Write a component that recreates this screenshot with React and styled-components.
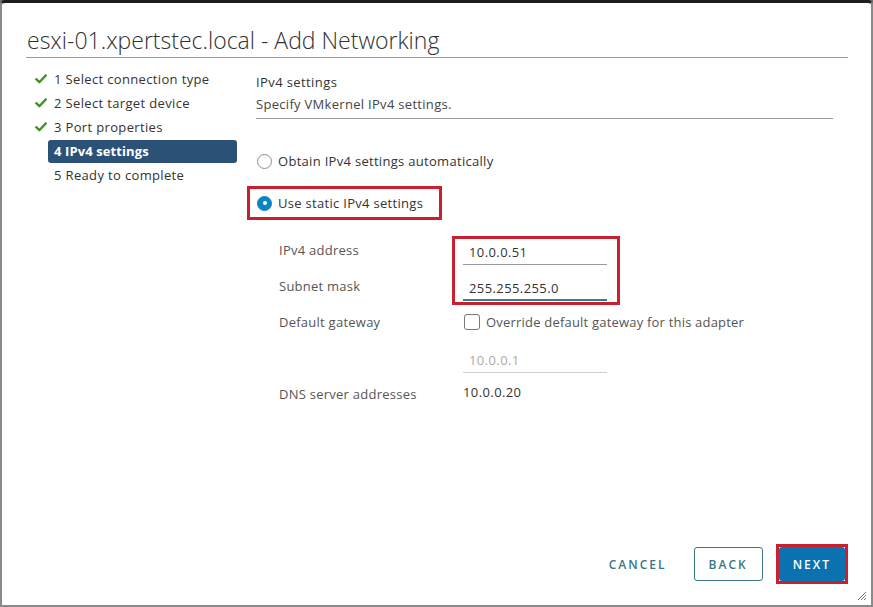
import React from 'react'
import styled, { createGlobalStyle } from 'styled-components'

const GlobalStyle = createGlobalStyle`
  html, body {
    margin: 0;
    padding: 0;
    background: #6f6f6f;
  }
  body {
    font-family: "Open Sans", Lato, sans-serif;
    font-size: 13px;
    letter-spacing: 0.3px;
    color: #333;
  }
`

const Dialog = styled.div`
  position: relative;
  box-sizing: border-box;
  width: 873px;
  height: 607px;
  background: #fff;
  border: 2px solid #8a8a8a;
  border-top: 3px solid #1e1e1e;
  border-radius: 5px 5px 0 0;
  display: flex;
  flex-direction: column;
`

const Header = styled.div`
  padding: 23px 23px 0 24px;
`

const Title = styled.h1`
  margin: 0;
  font-size: 23px;
  font-weight: 300;
  letter-spacing: 0;
  line-height: 28px;
  color: #313131;
  padding: 0 0 3px 1px;
  border-bottom: 1px solid #9a9a9a;
`

const Body = styled.div`
  flex: 1;
  display: flex;
  gap: 19px;
  padding: 9px 38px 0 24px;
`

const Nav = styled.ul`
  list-style: none;
  margin: 0;
  padding: 0;
  width: 211px;
`

const NavRow = styled.li`
  display: flex;
  align-items: center;
  height: 24px;
`

const CheckSlot = styled.span`
  width: 22px;
  display: flex;
  padding-left: 9px;
  box-sizing: border-box;
`

const NavItem = styled.span`
  flex: 1;
  height: 23px;
  line-height: 23px;
  padding-left: 6px;
  border-radius: 3px;
  font-weight: ${p => (p.$active ? 700 : 500)};
  letter-spacing: ${p => (p.$active ? 0.1 : 0.35)}px;
  color: ${p => (p.$active ? '#fff' : '#333')};
  background: ${p => (p.$active ? '#2c5177' : 'transparent')};
`

const Content = styled.div`
  flex: 1;
  padding-top: 5px;
`

const SectionHead = styled.div`
  border-bottom: 1px solid #9a9a9a;
  padding-bottom: 4px;
`

const SectionTitle = styled.div`
  font-weight: 500;
  line-height: 20px;
  letter-spacing: 0.4px;
  color: #333;
`

const SectionDesc = styled.div`
  line-height: 20px;
  margin-top: 2px;
  color: #444;
`

const RadioGroup = styled.div`
  display: flex;
  flex-direction: column;
  gap: 22px;
  margin-top: 32px;
  padding-left: 1px;
`

const Highlight = styled.div`
  position: relative;
  align-self: flex-start;
  &::after {
    content: '';
    position: absolute;
    top: ${p => p.$top}px;
    left: ${p => p.$left}px;
    width: ${p => p.$w}px;
    height: ${p => p.$h}px;
    border: 3px solid #c8202e;
    box-sizing: border-box;
    pointer-events: none;
  }
`

const RadioRow = styled.label`
  display: flex;
  align-items: center;
  gap: 6px;
  height: 20px;
  font-weight: 500;
  color: #333;
`

const RadioDot = styled.span`
  box-sizing: border-box;
  width: 15px;
  height: 15px;
  border-radius: 50%;
  border: 1px solid ${p => (p.$on ? '#0b84c6' : '#8d8d8d')};
  background: ${p => (p.$on ? '#0b84c6' : '#fff')};
  display: flex;
  align-items: center;
  justify-content: center;
  &::after {
    content: '';
    display: ${p => (p.$on ? 'block' : 'none')};
    width: 4px;
    height: 4px;
    border-radius: 50%;
    background: #fff;
  }
`

const FormGrid = styled.div`
  display: grid;
  grid-template-columns: 184px 1fr;
  grid-auto-rows: 36px;
  margin-top: 19px;
  padding-left: 23px;
`

const Label = styled.div`
  grid-column: 1;
  display: flex;
  align-items: center;
  letter-spacing: 0.25px;
  color: #555;
`

const InputStack = styled(Highlight)`
  grid-column: 2;
  grid-row: 1 / 3;
  display: grid;
  grid-template-rows: 36px 36px;
  align-self: stretch;
`

const Cell = styled.div`
  grid-column: 2;
  display: flex;
  align-items: center;
`

const StackCell = styled.div`
  display: flex;
  align-items: center;
`

const TextInput = styled.div`
  box-sizing: border-box;
  width: 144px;
  height: 24px;
  margin-top: 6px;
  padding-left: 6px;
  line-height: 23px;
  letter-spacing: 0.4px;
  color: ${p => (p.$disabled ? '#aaa' : '#333')};
  border-bottom: ${p => (p.$focus ? '2px solid #2f8092' : p.$disabled ? '1px solid #cfcfcf' : '1px solid #9a9a9a')};
`

const CheckRow = styled.label`
  display: flex;
  align-items: center;
  gap: 6px;
  padding-left: 1px;
  letter-spacing: 0.2px;
  color: #555;
`

const CheckBox = styled.span`
  box-sizing: border-box;
  width: 16px;
  height: 16px;
  border: 1px solid #777;
  border-radius: 3px;
`

const Value = styled.div`
  letter-spacing: 0.4px;
  color: #333;
  margin-top: -4px;
`

const Footer = styled.div`
  display: flex;
  justify-content: flex-end;
  align-items: center;
  padding: 0 23px 21px 0;
`

const Button = styled.button`
  box-sizing: border-box;
  height: 34px;
  padding: 0 ${p => p.$pad || 15}px;
  margin-left: ${p => p.$gap || 0}px;
  font-family: inherit;
  font-size: 12px;
  font-weight: 600;
  letter-spacing: 2px;
  border-radius: 3px;
  border: 1px solid ${p => (p.$variant === 'outline' ? '#3a7683' : 'transparent')};
  background: ${p => (p.$variant === 'primary' ? '#0a72b0' : 'transparent')};
  color: ${p => (p.$variant === 'primary' ? '#fff' : '#3a7683')};
  cursor: pointer;
`

const NextWrap = styled.div`
  margin-left: 13px;
  border: 3px solid #c8202e;
  display: flex;
`

const Grip = styled.svg`
  position: absolute;
  right: 4px;
  bottom: 4px;
`

const Check = () => (
  <svg width="12" height="10" viewBox="0 0 12 10">
    <path d="M1.2 5.2 L4.4 8.2 L10.8 1.4" fill="none" stroke="#4b8f2c" strokeWidth="2.4" strokeLinecap="round" strokeLinejoin="round" />
  </svg>
)

const steps = [
  { label: '1 Select connection type', done: true },
  { label: '2 Select target device', done: true },
  { label: '3 Port properties', done: true },
  { label: '4 IPv4 settings', active: true },
  { label: '5 Ready to complete' },
]

export default function App() {
  return (
    <>
      <GlobalStyle />
      <Dialog>
        <Header>
          <Title>esxi-01.xpertstec.local - Add Networking</Title>
        </Header>
        <Body>
          <Nav>
            {steps.map(s => (
              <NavRow key={s.label}>
                <CheckSlot>{s.done && <Check />}</CheckSlot>
                <NavItem $active={s.active}>{s.label}</NavItem>
              </NavRow>
            ))}
          </Nav>
          <Content>
            <SectionHead>
              <SectionTitle>IPv4 settings</SectionTitle>
              <SectionDesc>Specify VMkernel IPv4 settings.</SectionDesc>
            </SectionHead>
            <RadioGroup>
              <RadioRow>
                <RadioDot />
                Obtain IPv4 settings automatically
              </RadioRow>
              <Highlight $top={-7} $left={-10} $w={195} $h={34}>
                <RadioRow>
                  <RadioDot $on />
                  Use static IPv4 settings
                </RadioRow>
              </Highlight>
            </RadioGroup>
            <FormGrid>
              <Label>IPv4 address</Label>
              <InputStack $top={4} $left={-11} $w={168} $h={69}>
                <StackCell>
                  <TextInput>10.0.0.51</TextInput>
                </StackCell>
                <StackCell>
                  <TextInput $focus>255.255.255.0</TextInput>
                </StackCell>
              </InputStack>
              <Label>Subnet mask</Label>
              <Label>Default gateway</Label>
              <Cell>
                <CheckRow>
                  <CheckBox />
                  Override default gateway for this adapter
                </CheckRow>
              </Cell>
              <Label />
              <Cell>
                <TextInput $disabled>10.0.0.1</TextInput>
              </Cell>
              <Label>DNS server addresses</Label>
              <Cell>
                <Value>10.0.0.20</Value>
              </Cell>
            </FormGrid>
          </Content>
        </Body>
        <Footer>
          <Button $pad={11}>CANCEL</Button>
          <Button $variant="outline" $gap={15} $pad={14}>BACK</Button>
          <NextWrap>
            <Button $variant="primary" $pad={13}>NEXT</Button>
          </NextWrap>
        </Footer>
        <Grip width="10" height="10" viewBox="0 0 10 10">
          <path d="M9 1 L1 9 M9 4 L4 9 M9 7 L7 9" stroke="#777" strokeWidth="1" />
        </Grip>
      </Dialog>
    </>
  )
}
